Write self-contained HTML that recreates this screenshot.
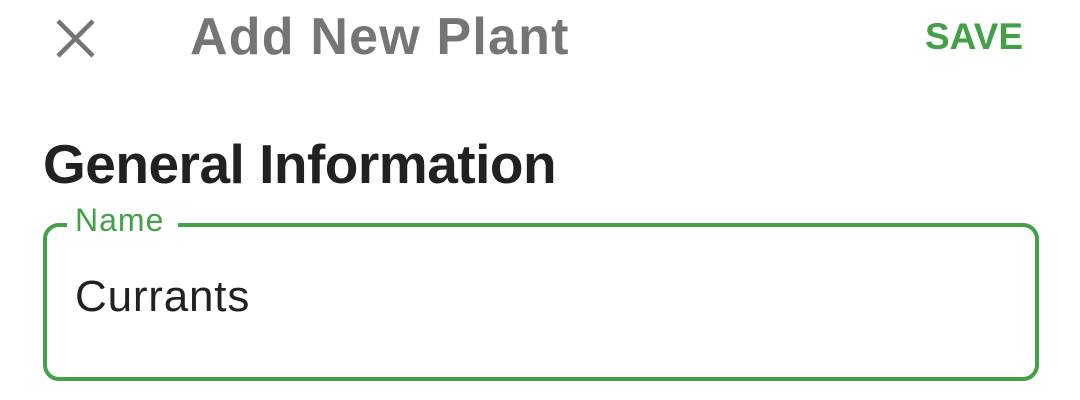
<!DOCTYPE html>
<html><head><style>
body{margin:0;width:1080px;height:400px;background:#fff;position:relative;overflow:hidden;font-family:"Liberation Sans",sans-serif}
.t{position:absolute;white-space:nowrap}
</style></head><body>
<svg class="t" style="left:54px;top:17px" width="44" height="44" viewBox="0 0 44 44"><path d="M4 4L39 39M39 4L4 39" stroke="#757575" stroke-width="4.5" fill="none"/></svg>
<div class="t" style="left:190px;top:5px;font-size:52px;font-weight:bold;color:#757575;line-height:64px;letter-spacing:1.2px">Add New Plant</div>
<div class="t" style="left:925px;top:15px;font-size:37px;font-weight:bold;color:#43a047;line-height:44px">SAVE</div>
<div class="t" style="left:43px;top:132px;font-size:55px;font-weight:bold;color:#212121;line-height:64px;letter-spacing:-0.5px">General Information</div>
<div class="t" style="left:43px;top:223px;width:988px;height:150px;border:4px solid #43a047;border-radius:16px"></div>
<div class="t" style="left:67px;top:200px;padding:0 14px 0 8px;background:#fff;font-size:32px;color:#43a047;line-height:40px;letter-spacing:1px">Name</div>
<div class="t" style="left:75px;top:272px;font-size:44px;color:#212121;line-height:50px;letter-spacing:0.8px">Currants</div>
</body></html>
